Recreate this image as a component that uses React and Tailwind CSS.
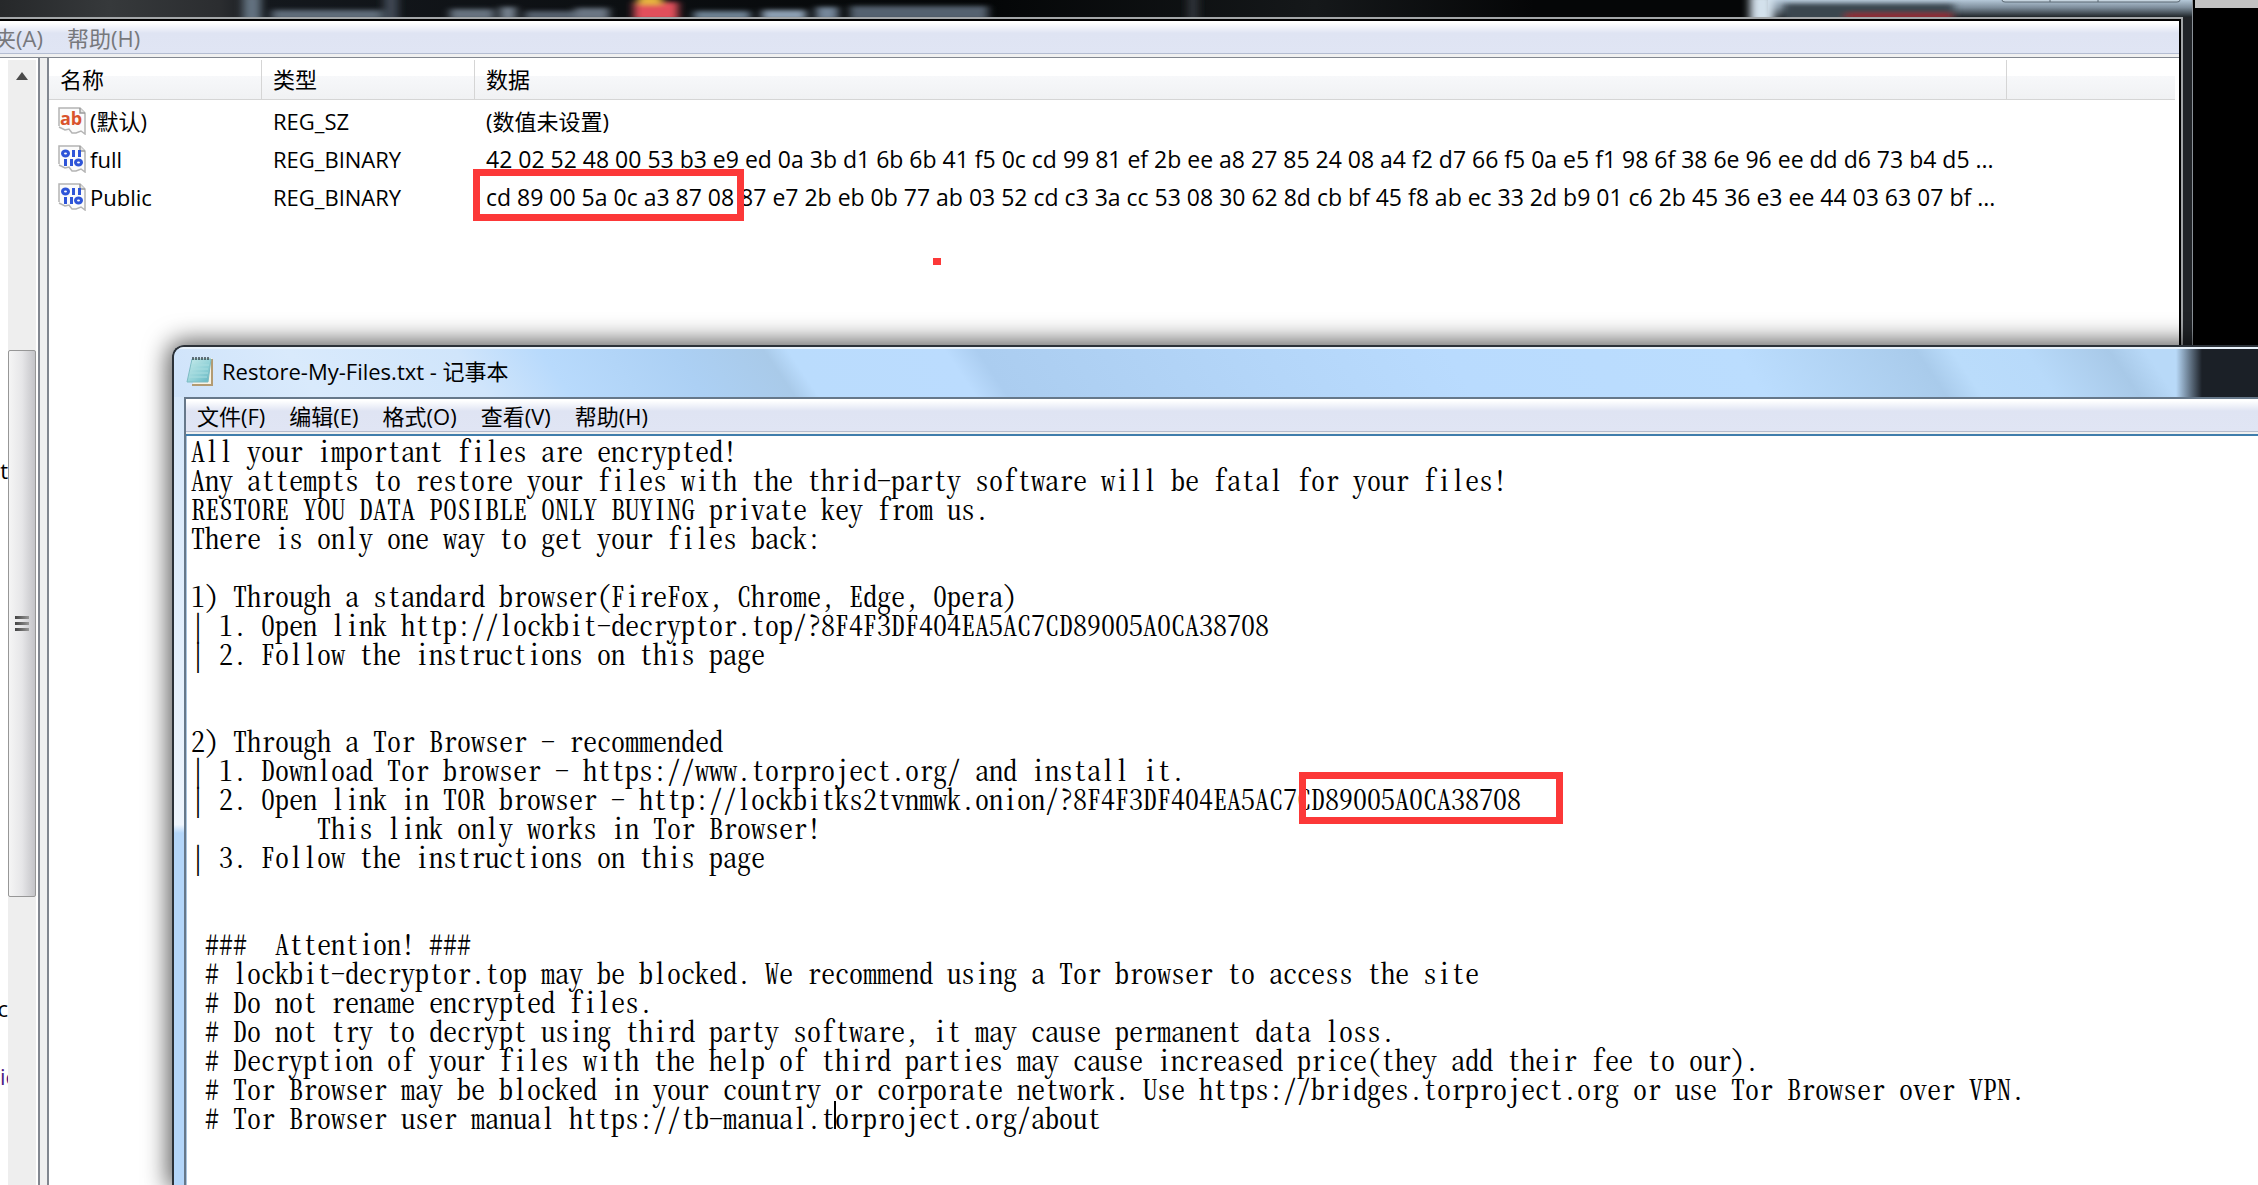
import clsx from 'clsx'

const VALUES = [
    { name: '(默认)', type: 'REG_SZ', data: '(数值未设置)', icon: 'string' },
    {
        name: 'full',
        type: 'REG_BINARY',
        data: '42 02 52 48 00 53 b3 e9 ed 0a 3b d1 6b 6b 41 f5 0c cd 99 81 ef 2b ee a8 27 85 24 08 a4 f2 d7 66 f5 0a e5 f1 98 6f 38 6e 96 ee dd d6 73 b4 d5 ...',
        icon: 'binary',
    },
    {
        name: 'Public',
        type: 'REG_BINARY',
        data: 'cd 89 00 5a 0c a3 87 08 87 e7 2b eb 0b 77 ab 03 52 cd c3 3a cc 53 08 30 62 8d cb bf 45 f8 ab ec 33 2d b9 01 c6 2b 45 36 e3 ee 44 03 63 07 bf ...',
        icon: 'binary',
    },
]

const NOTE = `All your important files are encrypted!
Any attempts to restore your files with the thrid-party software will be fatal for your files!
RESTORE YOU DATA POSIBLE ONLY BUYING private key from us.
There is only one way to get your files back:

1) Through a standard browser(FireFox, Chrome, Edge, Opera)
| 1. Open link http://lockbit-decryptor.top/?8F4F3DF404EA5AC7CD89005A0CA38708
| 2. Follow the instructions on this page


2) Through a Tor Browser - recommended
| 1. Download Tor browser - https://www.torproject.org/ and install it.
| 2. Open link in TOR browser - http://lockbitks2tvnmwk.onion/?8F4F3DF404EA5AC7CD89005A0CA38708
         This link only works in Tor Browser!
| 3. Follow the instructions on this page


 ###  Attention! ###
 # lockbit-decryptor.top may be blocked. We recommend using a Tor browser to access the site
 # Do not rename encrypted files.
 # Do not try to decrypt using third party software, it may cause permanent data loss.
 # Decryption of your files with the help of third parties may cause increased price(they add their fee to our).
 # Tor Browser may be blocked in your country or corporate network. Use https://bridges.torproject.org or use Tor Browser over VPN.
 # Tor Browser user manual https://tb-manual.torproject.org/about`

const MENU = ['文件(F)', '编辑(E)', '格式(O)', '查看(V)', '帮助(H)']

export default function App() {
    return (
        <div className="relative h-screen w-full overflow-hidden bg-black font-['Open_Sans','Noto_Sans_CJK_SC',sans-serif] text-[22px] text-black">
            <div className="ml-auto h-2 w-[63px] bg-[#c2c2c2]" />
            <Registry />
            <Notepad />

            {/* markers */}
            <div className="absolute left-[473px] top-[169px] h-[52px] w-[271px] border-[7px] border-[#fc3838]" />
            <div className="absolute left-[933px] top-[258px] h-[7px] w-2 bg-[#fc3838]" />
            <div className="absolute left-[1299px] top-[772px] h-[52px] w-[264px] border-[7px] border-[#fc3838]" />
        </div>
    )
}

function Registry() {
    return (
        <section className="absolute inset-y-0 left-0 right-[65px] flex flex-col border-r border-[#8b9298] bg-[#212428]">
            <Backdrop />
            <div className="mr-[9px] flex min-h-0 flex-1 flex-col border-r-2 border-t-2 border-[#a3a6a8] bg-black pr-0.5 pt-0.5">
                <nav className="flex h-8 shrink-0 items-center gap-6 bg-linear-to-b from-white from-5% via-[#dfe4f3] via-38% to-[#e0e5f4] pt-0.5 text-[22px] text-[#77787c]">
                    <button className="flex w-[43px] justify-end whitespace-nowrap">夹(A)</button>
                    <button>帮助(H)</button>
                </nav>
                <div className="flex h-[5px] shrink-0 flex-col border-b border-t border-b-[#828790] border-t-[#b4bdd2] bg-[#f0f0f0]" />
                <div className="flex min-h-0 flex-1 bg-[#f0f0f0]">
                    <Tree />
                    <div className="ml-[7px] min-w-0 flex-1 border-l-2 border-[#828790] bg-white pr-1 pt-0.5">
                        <Values />
                    </div>
                </div>
            </div>
        </section>
    )
}

function Tree() {
    return (
        <div className="flex w-10 border-r-2 border-[#828790] bg-white pr-0.5 pt-0.5">
            <div className="w-2 overflow-hidden pt-[394px] leading-8">
                <div className="flex justify-end">t</div>
                <div className="mt-[506px] flex justify-end">c</div>
                <div className="mt-9 text-[#4b1a86]">ic</div>
            </div>
            <div className="flex flex-1 flex-col items-center bg-[#eeeeee]">
                <svg className="mt-3 h-2 w-3" viewBox="0 0 12 8">
                    <path d="M6 0L12 8H0z" fill="#4a4a4a" />
                </svg>
                <div className="mt-[270px] flex h-[547px] w-full flex-col items-center justify-center gap-[3px] rounded-xs border border-[#979797] bg-linear-to-r from-[#f5f5f5] via-[#e6e6e8] to-[#c4c4c8]">
                    <span className="h-[3px] w-3.5 bg-linear-to-r from-[#444] to-[#999]" />
                    <span className="h-[3px] w-3.5 bg-linear-to-r from-[#444] to-[#999]" />
                    <span className="h-[3px] w-3.5 bg-linear-to-r from-[#444] to-[#999]" />
                </div>
            </div>
        </div>
    )
}

function Values() {
    const th = 'h-10 border-b border-[#d5d5d5] pl-[11px] text-left font-normal'

    return (
        <table className="w-full table-fixed border-separate border-spacing-0 whitespace-nowrap">
            <thead>
                <tr className="bg-linear-to-b from-white from-40% via-[#f7f8fa] via-40% to-[#f0f1f3]">
                    <th className={clsx(th, 'w-[213px] border-r')}>名称</th>
                    <th className={clsx(th, 'w-[213px] border-r')}>类型</th>
                    <th className={clsx(th, 'border-r')}>数据</th>
                    <th className={clsx(th, 'w-[168px]')} />
                </tr>
            </thead>
            <tbody>
                <tr className="h-0.5" />
                {VALUES.map(v => (
                    <tr key={v.name} className="h-[38px]">
                        <td className="pl-[9px]">
                            <div className="flex items-center gap-1">
                                {v.icon === 'string' ? <StringIcon /> : <BinaryIcon />}
                                {v.name}
                            </div>
                        </td>
                        <td className="pl-[11px]">{v.type}</td>
                        <td className={clsx('pl-[11px] leading-8', v.icon === 'binary' && 'text-[23px]')}>{v.data}</td>
                        <td />
                    </tr>
                ))}
            </tbody>
        </table>
    )
}

function Notepad() {
    return (
        <section className="absolute -right-4 bottom-0 left-[172px] top-[345px] flex flex-col overflow-hidden rounded-tl-xl border-l-2 border-t-2 border-[#2b3138] bg-linear-to-b from-[#d3e6fa] via-[#eef5fd] via-57% to-[#b4d6f9] to-58% shadow-[0_0_24px_4px_rgba(0,0,0,0.65)]">
            <header className="flex h-[50px] shrink-0 items-center border-t-2 border-[#e9f3fc] bg-[linear-gradient(to_right,transparent_2002px,#1b2027_2028px),linear-gradient(56deg,#cfe3fa_0px,#d9eafc_120px,#d0e5fb_260px,#b8dafc_330px,#acd0f4_440px,#a9cae9_515px,#badcfd_535px,#bbdcfe_665px,#abcdf0_692px,#b3d5f8_900px,#b9dbfe_1080px,#bbddfe_1320px,#a9cbeb_1470px,#badcfb_1500px,#b8dafa_1560px,#a8c9e8_1630px,#b8d9f8_1660px)] pb-1 pl-3">
                <NotepadIcon />
                <h1 className="ml-2">Restore-My-Files.txt - 记事本</h1>
            </header>
            <div className="ml-2.5 flex min-h-0 flex-1 flex-col border-l-2 border-t-2 border-[#66788a] bg-white">
                <nav className="flex h-8 shrink-0 items-center gap-6 bg-linear-to-b from-white from-5% via-[#dfe4f3] via-38% to-[#e0e5f4] pl-[11px] pt-0.5 text-[22px]">
                    {MENU.map(item => <button key={item}>{item}</button>)}
                </nav>
                <div className="h-[5px] shrink-0 border-b-2 border-t border-b-[#3f7dac] border-t-[#b6bccd] bg-[#f0f0f0]" />
                <div className="relative flex min-h-0 flex-1">
                    <textarea
                        aria-label="Restore-My-Files.txt"
                        className="flex-1 resize-none overflow-hidden whitespace-pre border-l border-[#a9c3dc] pl-1 font-['Noto_Serif_CJK_SC','Noto_Sans_Mono_CJK_SC',monospace] text-[28px] leading-[29px] outline-none [font-feature-settings:'hwid','liga'_0]"
                        wrap="off"
                        spellCheck={false}
                        defaultValue={NOTE}
                    />
                    <span className="absolute left-[648px] top-[665px] h-7 w-0.5 bg-black" />
                </div>
            </div>
        </section>
    )
}

// what shows through the glass title bar
function Backdrop() {
    return (
        <svg className="h-[17px] w-full shrink-0" viewBox="0 0 2192 17" preserveAspectRatio="xMinYMin slice">
            <defs>
                <filter id="soft" x="-10%" y="-50%" width="120%" height="200%">
                    <feGaussianBlur stdDeviation="4 2" />
                </filter>
                <linearGradient id="glass" x1="0" x2="1" y1="0" y2="0">
                    <stop offset="0" stopColor="#26282a" />
                    <stop offset="0.05" stopColor="#36393b" />
                    <stop offset="0.1" stopColor="#2b2d30" />
                    <stop offset="0.12" stopColor="#14181d" />
                    <stop offset="0.45" stopColor="#040607" />
                    <stop offset="0.6" stopColor="#15181a" />
                    <stop offset="0.7" stopColor="#050607" />
                    <stop offset="1" stopColor="#050607" />
                </linearGradient>
                <linearGradient id="right" x1="0" x2="0" y1="0" y2="1">
                    <stop offset="0" stopColor="#b5c8d8" />
                    <stop offset="0.45" stopColor="#7d8d9b" />
                    <stop offset="1" stopColor="#1f2529" />
                </linearGradient>
            </defs>
            <rect width="2192" height="17" fill="url(#glass)" />
            <rect x="1768" width="424" height="17" fill="url(#right)" />
            <g filter="url(#soft)">
                <rect x="243" y="-4" width="18" height="25" fill="#647280" />
                <rect x="272" y="10" width="110" height="10" fill="#5f6c79" />
                <rect x="384" y="-4" width="14" height="25" fill="#3f4954" />
                <rect x="450" y="9" width="44" height="11" fill="#66727f" />
                <rect x="500" y="7" width="16" height="13" fill="#74818e" />
                <rect x="525" y="11" width="50" height="9" fill="#55616d" />
                <rect x="575" y="8" width="34" height="12" fill="#6a7683" />
                <rect x="634" y="2" width="44" height="18" fill="#e2505c" />
                <rect x="638" y="-4" width="24" height="9" fill="#e6b43c" />
                <rect x="694" y="11" width="56" height="9" fill="#6d8193" />
                <rect x="762" y="10" width="44" height="10" fill="#8c9fb2" />
                <rect x="816" y="7" width="22" height="13" fill="#75869a" />
                <rect x="850" y="6" width="138" height="14" fill="#55626f" />
                <rect x="1188" y="-4" width="10" height="25" fill="#30353c" />
                <rect x="1750" y="-4" width="24" height="25" fill="#d3e1ec" />
                <rect x="1784" y="4" width="170" height="18" fill="#3a4650" />
                <rect x="1846" y="13" width="106" height="7" fill="#8e2b30" />
            </g>
            <path d="M2002 -2V0q0 2 3 2H2177q3 0 3-2V-2M2050 -2V2M2098 -2V2" fill="#c5d4df" stroke="#596670" />
        </svg>
    )
}

function Sheet({ children }) {
    return (
        <svg className="size-7 shrink-0" viewBox="0 0 28 28">
            <path d="M1 1H22L27 6V27L22 24L18 27L13 24L9 26L6 22H1z" fill="#fbfbfb" />
            <path d="M1 19V1H22L27 6V27L23 24L18 26H14L11 22L7 23L1 20" fill="none" stroke="#b4b4b4" strokeWidth="1.5" />
            <path d="M22 1V6H27" fill="#e4e4e4" stroke="#9a9a9a" strokeWidth="1.5" />
            {children}
        </svg>
    )
}

function StringIcon() {
    return (
        <Sheet>
            <text x="2" y="18" className="font-['Open_Sans'] text-[18px] font-bold" fill="#d9532c">ab</text>
        </Sheet>
    )
}

function BinaryIcon() {
    return (
        <Sheet>
            <g fill="none" stroke="#2f55d8" strokeWidth="3">
                <ellipse cx="7.500" cy="8.500" rx="3" ry="2.500" />
                <path d="M15.500 5V12M21.500 5V12M7.500 14V21M13.500 14V21" />
                <ellipse cx="20.500" cy="17.500" rx="3" ry="2.500" />
            </g>
        </Sheet>
    )
}

function NotepadIcon() {
    return (
        <svg className="h-8 w-7 shrink-0" viewBox="0 0 28 32">
            <defs>
                <linearGradient id="page" x1="0" x2="1" y1="0" y2="1">
                    <stop offset="0" stopColor="#c9ecec" />
                    <stop offset="0.6" stopColor="#8fd0d6" />
                    <stop offset="1" stopColor="#5fb3bf" />
                </linearGradient>
            </defs>
            <path d="M8 3H26V30H7V26z" fill="#f7f3e6" />
            <path d="M26 4V30H6" fill="none" stroke="#b39b72" strokeWidth="2" />
            <path d="M6 4H25L22 27H1z" fill="url(#page)" stroke="#7dbcc4" />
            <path d="M5 10H23M5 14H22M4 18H22M3 22H21" stroke="#a9dde0" strokeWidth="1" />
            <path d="M7 2V5M10 2V5M13 2V5M16 2V5M19 2V5M22 2V5" stroke="#3d4a50" strokeWidth="1.500" />
        </svg>
    )
}
